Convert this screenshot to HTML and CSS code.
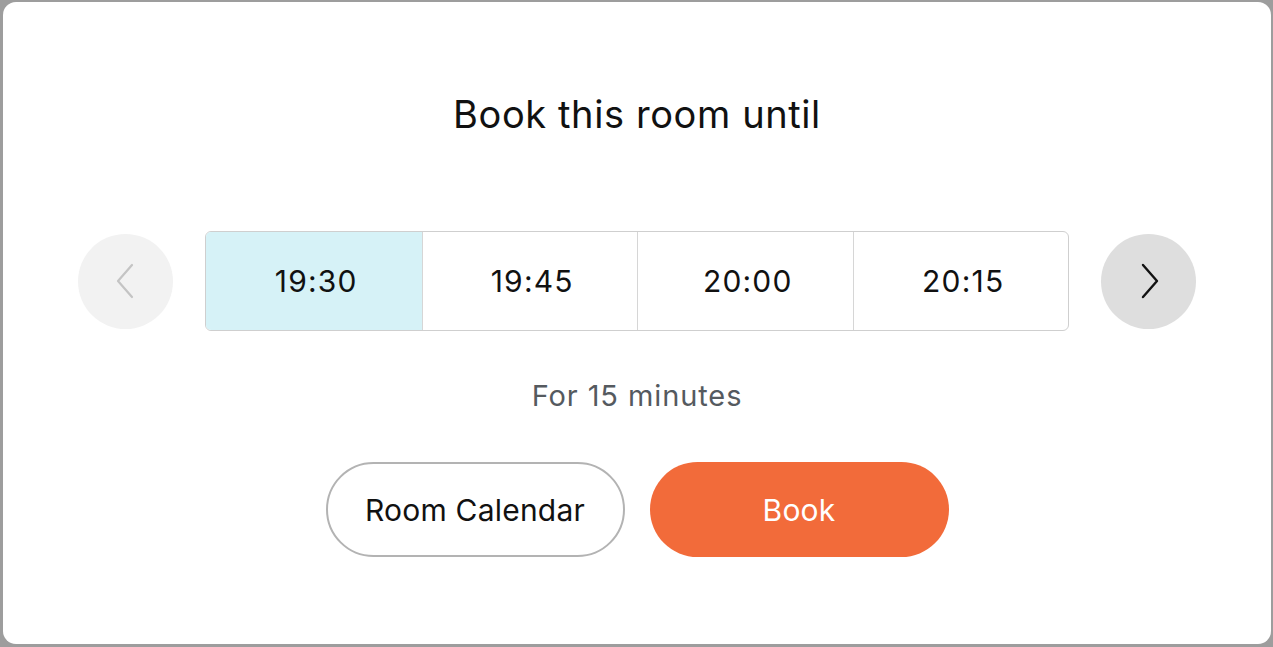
FILE: index.html
```html
<!DOCTYPE html>
<html lang="en">
<head>
	<meta charset="UTF-8">
	<meta name="viewport" content="width=device-width, initial-scale=1.0">
	<title>Book room</title>
	<link rel="stylesheet" href="styles.css">
</head>
<body>
	<div class="panel">
		<h1 class="title">Book this room until</h1>

		<div class="picker">
			<button class="nav nav_prev" disabled>
				<svg width="24" height="36" viewBox="0 0 24 36"><path d="M18 2 L4 18 L18 34" fill="none" stroke="#c4c4c4" stroke-width="2.2" stroke-linecap="round" stroke-linejoin="round"/></svg>
			</button>
			<div class="slots">
				<div class="slot selected">19:30</div>
				<div class="slot">19:45</div>
				<div class="slot">20:00</div>
				<div class="slot">20:15</div>
			</div>
			<button class="nav nav_next">
				<svg width="24" height="36" viewBox="0 0 24 36"><path d="M6 2 L20 18 L6 34" fill="none" stroke="#111" stroke-width="2.4" stroke-linecap="round" stroke-linejoin="round"/></svg>
			</button>
		</div>

		<p class="duration">For 15 minutes</p>

		<div class="actions">
			<button class="btn btn_outline">Room Calendar</button>
			<button class="btn btn_book">Book</button>
		</div>
	</div>
</body>
</html>
```

FILE: styles.css
```css
html, body{
	margin: 0;
	height: 100%;
}
body{
	background-color: #9d9d9d;
	font-family: "Inter", "Roboto", sans-serif;
	box-sizing: border-box;
	padding: 2px 2px 3px 3px;
}
.panel{
	background-color: white;
	border-radius: 13px;
	height: 100%;
	display: flex;
	flex-direction: column;
	align-items: center;
	box-sizing: border-box;
	padding-top: 89px;
}
.title{
	margin: 0;
	font-size: 38px;
	font-weight: 400;
	letter-spacing: 0.6px;
	color: #111;
	line-height: 46px;
}
.picker{
	display: flex;
	align-items: center;
	gap: 32px;
	margin-top: 94px;
}
.nav{
	width: 95px;
	height: 95px;
	border-radius: 50%;
	border: none;
	display: flex;
	align-items: center;
	justify-content: center;
	padding: 0;
}
.nav_prev{
	background-color: #f2f2f2;
}
.nav_next{
	background-color: #dedede;
}
.slots{
	display: grid;
	grid-template-columns: repeat(4, 1fr);
	width: 864px;
	height: 100px;
	box-sizing: border-box;
	border: solid 1px #cfcfcf;
	border-radius: 6px;
	overflow: hidden;
}
.slot{
	display: flex;
	align-items: center;
	justify-content: center;
	padding-left: 5px;
	font-size: 30px;
	letter-spacing: 1.2px;
	color: #111;
	border-left: solid 1px #d6d6d6;
}
.slot:first-child{
	border-left: none;
}
.slot.selected{
	background-color: #d6f2f7;
}
.duration{
	margin: 47px 0 0;
	font-size: 29px;
	letter-spacing: 0.9px;
	color: #555a5f;
	line-height: 36px;
}
.actions{
	display: flex;
	gap: 25px;
	margin-top: 48px;
}
.btn{
	width: 299px;
	height: 95px;
	border-radius: 48px;
	font-family: inherit;
	font-size: 30px;
	letter-spacing: 0.2px;
	cursor: pointer;
}
.btn_outline{
	background-color: white;
	border: solid 2px #b3b3b3;
	color: #111;
}
.btn_book{
	background-color: #f26b3a;
	border: none;
	color: white;
}
```
